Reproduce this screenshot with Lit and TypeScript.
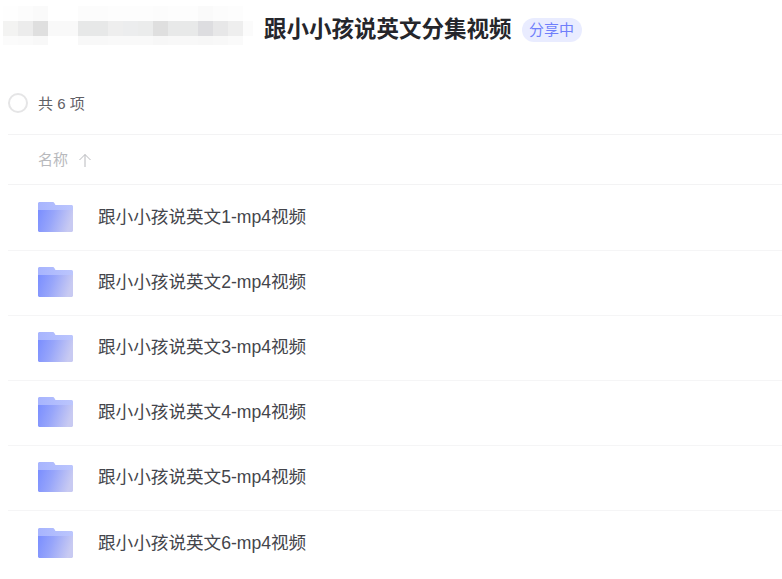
import { LitElement, html, css, svg } from 'lit';
import { customElement } from 'lit/decorators.js';

// mosaic colours of the blurred part of the breadcrumb, one array per row
const MOSAIC = [
  ['#fefefe', '#fcfcfc', '#fafafa', '#ffffff', '#ffffff', '#fcfcfc', '#fcfcfc', '#fdfdfd', '#fdfdfd', '#fdfdfd', '#fcfcfc', '#fdfdfd', '#fdfdfd', '#fafafa', '#fcfcfc', '#fdfdfd', '#ffffff'],
  ['#f3f3f2', '#ececec', '#dfdfdf', '#f9f9f9', '#f9f9f9', '#e7e8e8', '#e7e8e8', '#eeeeee', '#ecedee', '#ebecec', '#dfdfdf', '#e8e9e9', '#e8e9e9', '#dddde0', '#e7e7e8', '#eeeeee', '#fbfbfb'],
  ['#fbfbfb', '#fafafa', '#f8f8f8', '#ffffff', '#ffffff', '#f8f8f8', '#f8f8f8', '#f9f9f9', '#f9f9f9', '#f9f9f9', '#f7f7f7', '#f8f8f8', '#f8f8f8', '#f7f7f7', '#f8f8f8', '#fafafa', '#ffffff'],
];

const FOLDERS = [1, 2, 3, 4, 5, 6].map((n) => `跟小小孩说英文${n}-mp4视频`);

const folderIcon = svg`
  <svg class="folder" viewBox="0 0 35 30" width="35" height="30">
    <defs>
      <linearGradient id="front" x1="0" y1="0" x2="1" y2="0.2">
        <stop offset="0" stop-color="#7a8eff" />
        <stop offset="0.45" stop-color="#97a5fa" />
        <stop offset="1" stop-color="#c8caf2" />
      </linearGradient>
      <linearGradient id="back" x1="0" y1="0" x2="1" y2="0">
        <stop offset="0" stop-color="#a7b4fe" />
        <stop offset="1" stop-color="#bcc6fd" />
      </linearGradient>
    </defs>
    <path d="M1.500 0h13c1 0 1.500.4 2 1.200L17.500 3H33.500c.8 0 1.500.7 1.500 1.500V10H0V1.500C0 .7.700 0 1.500 0z" fill="url(#back)" />
    <path d="M0 8h35v20.500c0 .8-.7 1.500-1.500 1.500h-32C.7 30 0 29.300 0 28.500z" fill="url(#front)" />
  </svg>
`;

@customElement('app-root')
export class AppRoot extends LitElement {
  static styles = css`
    :host {
      display: block;
      height: 579px;
      overflow: hidden;
      background: #fff;
      font-family: 'Liberation Sans', 'Noto Sans CJK SC', sans-serif;
    }
    .head {
      display: flex;
      align-items: center;
      height: 60px;
      padding-left: 3px;
    }
    .mosaic {
      display: grid;
      grid-template-columns: repeat(16, 15px) 10px;
      grid-template-rows: 15px 15px 9px;
      width: 250px;
      margin: 0 11px 9px 0;
    }
    .title {
      margin: 0;
      font-size: 22.5px;
      line-height: 30px;
      font-weight: 700;
      color: #25262b;
      white-space: nowrap;
    }
    .badge {
      margin-left: 10px;
      padding: 0 7.5px;
      height: 24px;
      line-height: 24px;
      border-radius: 12px;
      background: #e9ecff;
      color: #6f7ffb;
      font-size: 15px;
    }
    .count {
      display: flex;
      align-items: center;
      box-sizing: border-box;
      height: 75px;
      margin-left: 8px;
      padding-top: 12px;
      border-bottom: 1px solid #f3f3f4;
      font-size: 15px;
      color: #5f6066;
    }
    .count span:last-child {
      margin-bottom: 2px;
    }
    .check {
      width: 20px;
      height: 20px;
      box-sizing: border-box;
      border: 2px solid #e5e5e6;
      border-radius: 50%;
      margin-right: 10px;
    }
    .list {
      margin-left: 8px;
    }
    .columns {
      display: flex;
      align-items: center;
      box-sizing: border-box;
      height: 50px;
      padding: 0 0 2px 30px;
      border-bottom: 1px solid #f3f3f4;
      font-size: 15px;
      color: #b8b9bd;
    }
    .columns svg {
      margin: 2px 0 0 10px;
    }
    .row {
      display: flex;
      align-items: center;
      box-sizing: border-box;
      height: 65px;
      padding: 0 0 2px 30px;
      border-bottom: 1px solid #f5f5f6;
      font-size: 17.6px;
      color: #44454b;
    }
    .columns + .row {
      height: 66px;
      padding-top: 1px;
    }
    .row:last-of-type {
      border-bottom: none;
    }
    .row span {
      margin-bottom: 3px;
    }
    .folder {
      flex: none;
      margin-right: 25px;
    }
  `;

  render() {
    return html`
      <div class="head">
        <div class="mosaic">
          ${MOSAIC.flat().map((c) => html`<span style="background:${c}"></span>`)}
        </div>
        <h1 class="title">跟小小孩说英文分集视频</h1>
        <span class="badge">分享中</span>
      </div>
      <div class="count"><span class="check"></span><span>共 6 项</span></div>
      <div class="list">
        <div class="columns">
          名称
          <svg width="14" height="14" viewBox="0 0 14 14" fill="none" stroke="#b8b9bd" stroke-width="1">
            <path d="M7 14V1.500M1.500 7 7 1.500 12.500 7" />
          </svg>
        </div>
        ${FOLDERS.map((name) => html`<div class="row">${folderIcon}<span>${name}</span></div>`)}
      </div>
    `;
  }
}
